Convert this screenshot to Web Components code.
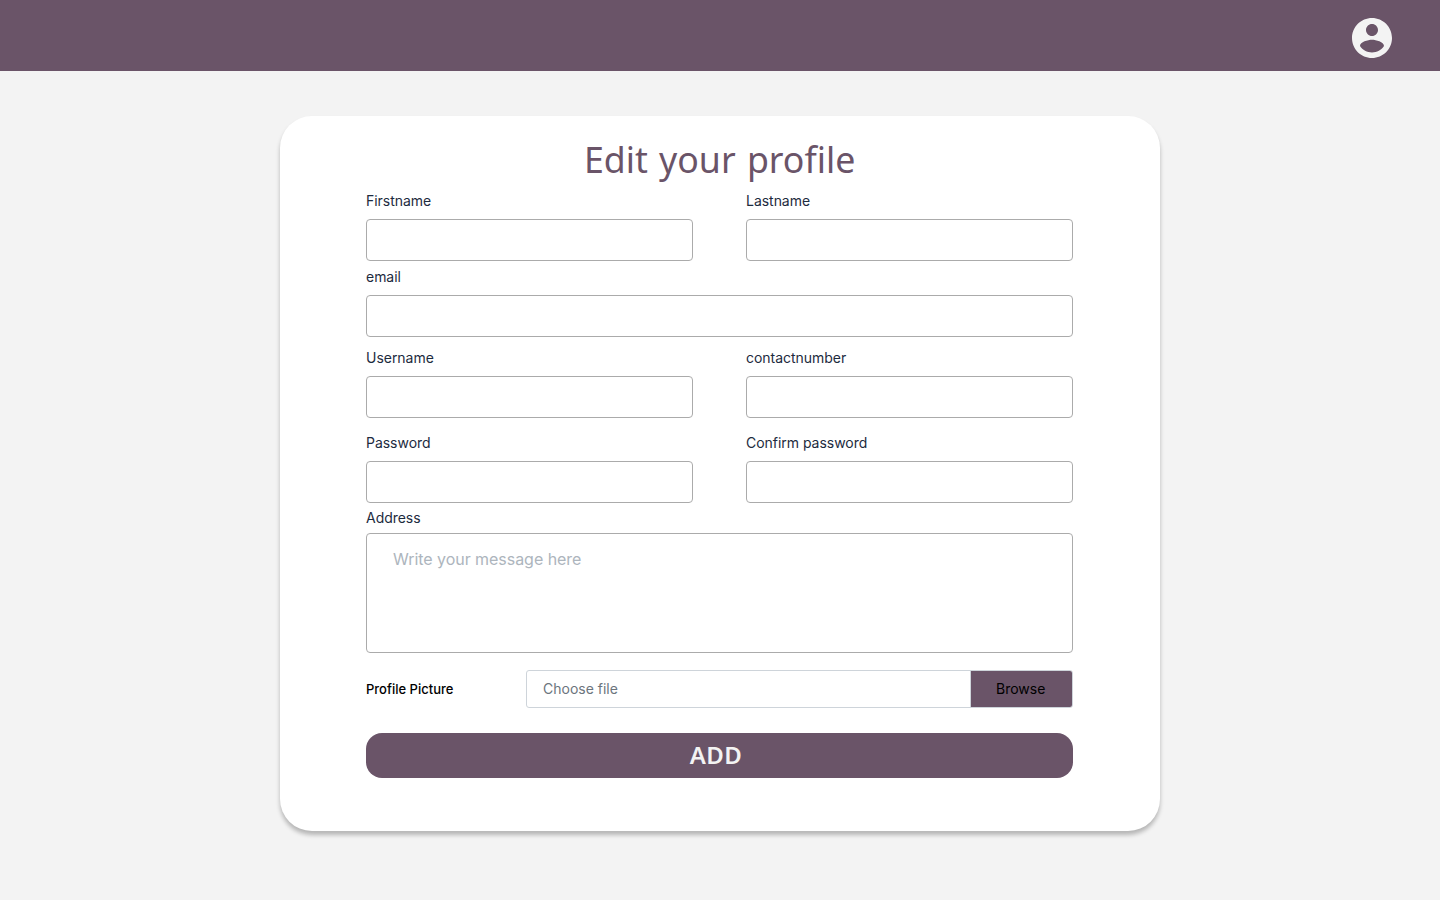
<!DOCTYPE html>
<html lang="en">
<head>
<meta charset="utf-8">
<title>Edit your profile</title>
<style>
html,body{margin:0;height:100%}
body{background:#f3f3f3;font-family:Inter,sans-serif;overflow:hidden}
</style>
</head>
<body>
<profile-page></profile-page>
<script>
const define = (name, html) => customElements.define(name, class extends HTMLElement {
  constructor() {
    super();
    const t = document.createElement('template');
    t.innerHTML = '<style>*{box-sizing:border-box}</style>' + html;
    this.attachShadow({mode: 'open'}).append(t.content.cloneNode(true));
  }
});

define('app-bar', `<style>
:host{display:flex;box-sizing:border-box;height:71px;background:#6a5468;justify-content:flex-end;align-items:flex-start;padding:14px 44px 0 0}
svg{display:block;fill:#f3f3f3}
</style>
<svg width="48" height="48" viewBox="0 0 24 24"><path d="M12 2C6.48 2 2 6.48 2 12s4.480 10 10 10 10-4.480 10-10S17.520 2 12 2zm0 3c1.660 0 3 1.340 3 3s-1.340 3-3 3-3-1.340-3-3 1.340-3 3-3zm0 14.200c-2.500 0-4.710-1.280-6-3.220.03-1.990 4-3.080 6-3.080 1.990 0 5.970 1.090 6 3.080-1.290 1.940-3.500 3.220-6 3.220z"/></svg>`);

define('text-field', `<style>
:host{display:flex;flex-direction:column;gap:var(--gap,8px);min-width:0}
.label{height:20px;font-size:14px;line-height:20px;letter-spacing:-.03px;color:#1d2b3e;white-space:nowrap}
.box{height:var(--box,42px);border:1px solid #ababab;border-radius:4px;background:#fff;padding:13px 26px;font-size:16px;line-height:24px;letter-spacing:-.04px;color:#adb5bd}
</style>
<div class="label"><slot name="label"></slot></div><div class="box"><slot></slot></div>`);

define('file-field', `<style>
:host{display:flex;align-items:center;height:38px}
.label{width:160px;font-size:13px;font-weight:500;line-height:20px;color:#000}
.box{flex:1;height:38px;display:flex;border:1px solid #ced4da;border-radius:3px;overflow:hidden;font-size:14px;line-height:36px}
.name{flex:1;padding-left:16px;color:#6c757d}
.browse{width:102px;border-left:1px solid #ced4da;background:#6a5468;color:#000;padding-left:25px}
</style>
<div class="label"><slot name="label"></slot></div>
<div class="box"><div class="name"><slot></slot></div><div class="browse"><slot name="action"></slot></div></div>`);

define('submit-button', `<style>
:host{display:block}
button{display:block;width:100%;height:45px;border:0;border-radius:16px;background:#6a5468;color:#f3f3f3;font:600 24px/43px "Noto Sans",sans-serif;letter-spacing:.4px;padding:0 7px 2px 0;text-align:center}
</style><button><slot></slot></button>`);

define('profile-card', `<style>
:host{display:block;box-sizing:border-box;width:880px;height:715px;border-radius:32px;background:#fff;box-shadow:0 4px 4px rgba(0,0,0,.25);padding:17px 87px 0 86px}
h1{margin:0;height:58px;font:400 37px/52px "Noto Sans",sans-serif;word-spacing:2px;color:#6a5468;text-align:center;white-space:nowrap}
h1 span{display:inline-block;transform:scaleX(.965)}
</style><h1><span><slot name="title"></slot></span></h1><slot></slot>`);

define('profile-page', `<style>
:host{display:block}
main{display:flex;justify-content:center;padding-top:45px}
.grid{display:grid;grid-template-columns:1fr 1fr;column-gap:53px}
.wide{grid-column:1/-1}
.email{margin-top:6px}.user{margin-top:11px}.pass{margin-top:15px}
.addr{margin-top:5px;--gap:5px;--box:120px}
file-field{margin-top:17px}submit-button{margin-top:25px}
</style>
<app-bar></app-bar>
<main><profile-card><span slot="title">Edit your profile</span>
<div class="grid">
<text-field><span slot="label">Firstname</span></text-field>
<text-field><span slot="label">Lastname</span></text-field>
<text-field class="wide email"><span slot="label">email</span></text-field>
<text-field class="user"><span slot="label">Username</span></text-field>
<text-field class="user"><span slot="label">contactnumber</span></text-field>
<text-field class="pass"><span slot="label">Password</span></text-field>
<text-field class="pass"><span slot="label">Confirm password</span></text-field>
<text-field class="wide addr"><span slot="label">Address</span>Write your message here</text-field>
</div>
<file-field><span slot="label">Profile Picture</span>Choose file<span slot="action">Browse</span></file-field>
<submit-button>ADD</submit-button>
</profile-card></main>`);
</script>
</body>
</html>
